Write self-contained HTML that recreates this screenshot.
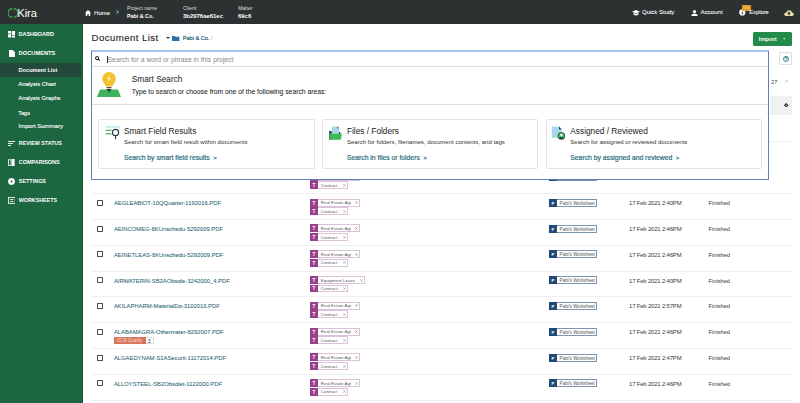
<!DOCTYPE html>
<html><head><meta charset="utf-8"><style>
html,body{margin:0;padding:0;width:800px;height:403px;overflow:hidden;background:#fff;position:relative}
body{font-family:"Liberation Sans",sans-serif}
.t{position:absolute;line-height:1;white-space:nowrap}
.r{position:absolute}
</style></head><body>
<div class="r" style="left:0.00px;top:0.00px;width:800.00px;height:24.30px;background:#2c3231"></div>
<div class="r" style="left:0.00px;top:24.30px;width:82.80px;height:379.00px;background:#1c6640"></div>
<div class="r" style="left:0.00px;top:63.00px;width:82.80px;height:13.50px;background:#23493a"></div>
<div class="r" style="left:80.80px;top:24.30px;width:2.00px;height:379.00px;background:#1a603b"></div>
<svg class="r" style="left:8px;top:8px" width="10" height="10" viewBox="0 0 10 10"><path d="M4.3 0.75 A4.25 4.25 0 0 0 4.3 9.25" fill="none" stroke="#3aa655" stroke-width="1.3"/><path d="M5.7 0.75 A4.25 4.25 0 0 1 5.7 9.25" fill="none" stroke="#3aa655" stroke-width="1.3"/></svg>
<div class="t" style="left:17.30px;top:8.00px;font-size:11.20px;color:#fff;font-weight:400;letter-spacing:-0.1px">Kira</div>
<svg class="r" style="left:84.5px;top:9.5px" width="6" height="6" viewBox="0 0 6 6"><path d="M3 0 L6 2.8 L5.2 2.8 L5.2 6 L3.8 6 L3.8 4.2 L2.2 4.2 L2.2 6 L0.8 6 L0.8 2.8 L0 2.8 Z" fill="#fff"/></svg>
<div class="t" style="left:94.00px;top:10.00px;font-size:6.10px;color:#fff;font-weight:400;-webkit-text-stroke:0.04px #fff">Home</div>
<svg class="r" style="left:116.2px;top:10.4px" width="3" height="4" viewBox="0 0 3 4"><path d="M0.5 0.3 L2.4 2 L0.5 3.7" fill="none" stroke="#eee" stroke-width="0.75"/></svg>
<div class="t" style="left:127.00px;top:6.00px;font-size:5.10px;color:#ddd;font-weight:400;">Project name</div>
<div class="t" style="left:127.00px;top:14.00px;font-size:5.35px;color:#fff;font-weight:700;">Pabi &amp; Co.</div>
<div class="t" style="left:183.00px;top:6.00px;font-size:5.24px;color:#ddd;font-weight:400;">Client</div>
<div class="t" style="left:183.00px;top:14.00px;font-size:5.95px;color:#fff;font-weight:700;">3b2976ae61ec</div>
<div class="t" style="left:238.00px;top:6.00px;font-size:5.08px;color:#ddd;font-weight:400;">Matter</div>
<div class="t" style="left:238.00px;top:14.00px;font-size:5.93px;color:#fff;font-weight:700;">69c6</div>
<svg class="r" style="left:631.5px;top:10px" width="8" height="6" viewBox="0 0 8 6"><path d="M4 0 L8 1.8 L4 3.6 L0 1.8 Z" fill="#fff"/><path d="M1.6 2.8 L1.6 4.8 Q4 6.2 6.4 4.8 L6.4 2.8 L4 3.9 Z" fill="#fff"/></svg>
<div class="t" style="left:642.00px;top:9.00px;font-size:6.00px;color:#fff;font-weight:400;-webkit-text-stroke:0.06px #fff">Quick Study</div>
<svg class="r" style="left:690.5px;top:9.8px" width="7" height="6" viewBox="0 0 7 6"><circle cx="3.5" cy="1.6" r="1.6" fill="#fff"/><path d="M0.3 6 Q0.3 3.4 3.5 3.4 Q6.7 3.4 6.7 6 Z" fill="#fff"/></svg>
<div class="t" style="left:700.60px;top:9.00px;font-size:6.10px;color:#fff;font-weight:400;-webkit-text-stroke:0.06px #fff">Account</div>
<svg class="r" style="left:738.5px;top:9.3px" width="7" height="7" viewBox="0 0 7 7"><circle cx="3.3" cy="3.4" r="3.1" fill="#fff"/><rect x="2.9" y="2.8" width="0.9" height="2.6" fill="#2b2f2f"/></svg>
<div class="r" style="left:742.00px;top:4.60px;width:9.00px;height:6.20px;background:#e8982e;border-radius:1px"></div>
<div class="t" style="left:744.00px;top:6.00px;font-size:4.40px;color:#fbd9a0;font-weight:400;">30</div>
<div class="t" style="left:749.20px;top:10.00px;font-size:5.80px;color:#fff;font-weight:400;-webkit-text-stroke:0.06px #fff">Explore</div>
<svg class="r" style="left:783.5px;top:9.8px" width="10" height="6" viewBox="0 0 10 6"><path d="M2.2 6 Q0 6 0.2 4.2 Q0.5 2.6 2.2 2.8 Q2.8 0 5.4 0.2 Q7.8 0.5 8 2.6 Q10 2.8 9.8 4.6 Q9.6 6 8 6 Z" fill="#ede3a6"/><path d="M5 1.6 L6.8 3.6 L5.7 3.6 L5.7 5.2 L4.3 5.2 L4.3 3.6 L3.2 3.6 Z" fill="#2b2f2f"/></svg>
<svg class="r" style="left:7.8px;top:31.3px" width="7.2" height="6.5" viewBox="0 0 7.2 6.5"><rect x="0" y="0" width="3" height="2.6" fill="#fff"/><rect x="0" y="3.3" width="3" height="3.2" fill="#fff"/><rect x="3.8" y="0" width="3.4" height="4" fill="#fff"/><rect x="3.8" y="4.6" width="3.4" height="1.9" fill="#fff"/></svg>
<div class="t" style="left:18.60px;top:32.00px;font-size:5.43px;color:#fff;font-weight:700;">DASHBOARD</div>
<svg class="r" style="left:8.9px;top:49.6px" width="6" height="7.2" viewBox="0 0 6 7.2"><path d="M0 0 L3.8 0 L6 2.2 L6 7.2 L0 7.2 Z" fill="#fff"/></svg>
<div class="t" style="left:18.60px;top:51.00px;font-size:5.71px;color:#fff;font-weight:700;">DOCUMENTS</div>
<div class="t" style="left:18.60px;top:68.00px;font-size:5.59px;color:#fff;font-weight:700;">Document List</div>
<div class="t" style="left:18.30px;top:82.00px;font-size:5.85px;color:#fff;font-weight:400;-webkit-text-stroke:0.12px #fff">Analysis Chart</div>
<div class="t" style="left:18.30px;top:96.00px;font-size:5.80px;color:#fff;font-weight:400;-webkit-text-stroke:0.12px #fff">Analysis Graphs</div>
<div class="t" style="left:18.30px;top:111.00px;font-size:5.49px;color:#fff;font-weight:400;-webkit-text-stroke:0.12px #fff">Tags</div>
<div class="t" style="left:18.60px;top:123.00px;font-size:6.00px;color:#fff;font-weight:400;-webkit-text-stroke:0.12px #fff">Import Summary</div>
<svg class="r" style="left:7.9px;top:140.9px" width="7" height="5" viewBox="0 0 7 5"><rect x="0" y="0" width="7" height="0.9" fill="#fff"/><rect x="0" y="2" width="5" height="0.9" fill="#fff"/><rect x="0" y="4" width="3" height="0.9" fill="#fff"/></svg>
<div class="t" style="left:18.80px;top:141.00px;font-size:5.33px;color:#fff;font-weight:700;">REVIEW STATUS</div>
<svg class="r" style="left:8.3px;top:158.8px" width="7" height="7" viewBox="0 0 7 7"><rect x="0.4" y="0.8" width="2.6" height="5.6" fill="none" stroke="#fff" stroke-width="0.8"/><rect x="3.6" y="0" width="3" height="7" fill="#fff"/></svg>
<div class="t" style="left:18.80px;top:160.00px;font-size:5.48px;color:#fff;font-weight:700;">COMPARISONS</div>
<svg class="r" style="left:8px;top:177.8px" width="7" height="7" viewBox="0 0 7 7"><circle cx="3.5" cy="3.5" r="2.4" fill="none" stroke="#fff" stroke-width="1.6"/><g stroke="#fff" stroke-width="1.3"><line x1="3.5" y1="0" x2="3.5" y2="7"/><line x1="0" y1="3.5" x2="7" y2="3.5"/><line x1="1" y1="1" x2="6" y2="6"/><line x1="6" y1="1" x2="1" y2="6"/></g><circle cx="3.5" cy="3.5" r="1" fill="#1c6640"/></svg>
<div class="t" style="left:18.80px;top:179.00px;font-size:5.44px;color:#fff;font-weight:700;">SETTINGS</div>
<svg class="r" style="left:7.9px;top:197px" width="7.6" height="7" viewBox="0 0 7.6 7"><rect x="0.4" y="0.4" width="6.8" height="6.2" fill="none" stroke="#fff" stroke-width="0.8"/><rect x="2" y="2" width="3.6" height="0.8" fill="#fff"/><rect x="2" y="4" width="3.6" height="0.8" fill="#fff"/></svg>
<div class="t" style="left:18.80px;top:198.00px;font-size:5.34px;color:#fff;font-weight:700;">WORKSHEETS</div>
<div class="t" style="left:91.50px;top:33.00px;font-size:9.60px;color:#2a2a2a;font-weight:400;letter-spacing:0.45px;-webkit-text-stroke:0.15px #2a2a2a">Document List</div>
<svg class="r" style="left:165.5px;top:37.3px" width="4" height="2" viewBox="0 0 4 2"><path d="M0 0 L4 0 L2 2 Z" fill="#333"/></svg>
<svg class="r" style="left:172.2px;top:35.5px" width="7.4" height="5.6" viewBox="0 0 7.4 5.6"><path d="M0 0 L2.8 0 L3.4 0.8 L7.4 0.8 L7.4 5.6 L0 5.6 Z" fill="#2a74a8"/></svg>
<div class="t" style="left:182.80px;top:36.00px;font-size:5.58px;color:#24607e;font-weight:400;-webkit-text-stroke:0.18px #24607e">Pabi &amp; Co. <span style="color:#999;-webkit-text-stroke:0">/</span></div>
<div class="r" style="left:753.20px;top:31.90px;width:39.00px;height:13.80px;background:#238a4a;border-radius:1.5px"></div>
<div class="t" style="left:758.80px;top:37.00px;font-size:5.79px;color:#fff;font-weight:700;">Import</div>
<svg class="r" style="left:782.6px;top:38.4px" width="2.6" height="1.4" viewBox="0 0 2.6 1.4"><path d="M0 0 L2.6 0 L1.3 1.4 Z" fill="#cfe"/></svg>
<div class="r" style="left:779.30px;top:52.40px;width:13.20px;height:12.80px;border:0.6px solid #ddd;box-sizing:border-box;background:#fff;border-radius:1px"></div>
<svg class="r" style="left:782.8px;top:55.8px" width="6" height="6" viewBox="0 0 6 6"><circle cx="3" cy="3" r="2.5" fill="none" stroke="#236f7d" stroke-width="0.9"/><path d="M2 2.3 Q2 1.3 3 1.3 Q4 1.3 4 2.2 Q4 2.9 3.1 3.2 L3.1 4" fill="none" stroke="#236f7d" stroke-width="0.8"/></svg>
<div class="t" style="left:771.20px;top:80.00px;font-size:5.60px;color:#444;font-weight:400;">27</div>
<div class="t" style="left:784.80px;top:79.00px;font-size:5.60px;color:#999;font-weight:400;">&gt;</div>
<div class="r" style="left:770.40px;top:95.50px;width:21.60px;height:19.40px;background:#f1f1f1"></div>
<svg class="r" style="left:784.3px;top:102.8px" width="4.4" height="4.4" viewBox="0 0 4.4 4.4"><path d="M2.2 0 L4.4 2.2 L2.2 4.4 L0 2.2 Z" fill="#111"/><circle cx="2.2" cy="2.2" r="0.7" fill="#f1f1f1"/></svg>
<div class="r" style="left:91.00px;top:193.11px;width:701.00px;height:0.80px;background:#efefef"></div>
<div class="r" style="left:97.10px;top:174.00px;width:5.80px;height:5.90px;border:0.8px solid #4a4a4a;box-sizing:border-box;border-radius:0.8px"></div>
<div class="r" style="left:310.10px;top:172.80px;width:7.80px;height:7.90px;background:#9a3f8b"></div>
<div class="t" style="left:312.50px;top:176.00px;font-size:4.60px;color:#fff;font-weight:700;">T</div>
<div class="r" style="left:317.90px;top:172.80px;width:42.20px;height:7.90px;border:0.5px solid #dcc2d6;border-left:none;box-sizing:border-box;background:#fff"></div>
<div class="t" style="left:320.80px;top:175.00px;font-size:4.40px;color:#5a5a5a;font-weight:400;">Real Estate Agt</div>
<svg class="r" style="left:355.00px;top:175.40px" width="3" height="3" viewBox="0 0 3 3"><path d="M0.2 0.2 L2.8 2.8 M2.8 0.2 L0.2 2.8" stroke="#777" stroke-width="0.45"/></svg>
<div class="r" style="left:310.10px;top:181.30px;width:7.80px;height:7.90px;background:#9a3f8b"></div>
<div class="t" style="left:312.50px;top:184.00px;font-size:4.60px;color:#fff;font-weight:700;">T</div>
<div class="r" style="left:317.90px;top:181.30px;width:30.20px;height:7.90px;border:0.5px solid #dcc2d6;border-left:none;box-sizing:border-box;background:#fff"></div>
<div class="t" style="left:320.80px;top:184.00px;font-size:4.40px;color:#5a5a5a;font-weight:400;">Contract</div>
<svg class="r" style="left:343.00px;top:183.90px" width="3" height="3" viewBox="0 0 3 3"><path d="M0.2 0.2 L2.8 2.8 M2.8 0.2 L0.2 2.8" stroke="#777" stroke-width="0.45"/></svg>
<div class="r" style="left:549.10px;top:172.90px;width:8.30px;height:8.00px;background:#1e4a78"></div>
<div class="t" style="left:551.40px;top:176.00px;font-size:4.20px;color:#fff;font-weight:700;">P</div>
<div class="r" style="left:557.40px;top:172.90px;width:40.10px;height:8.00px;border:0.5px solid #7f93ad;border-left:none;box-sizing:border-box;background:#fff"></div>
<div class="t" style="left:559.60px;top:176.00px;font-size:4.57px;color:#555;font-weight:400;">Pabi's Worksheet</div>
<div class="r" style="left:91.00px;top:218.92px;width:701.00px;height:0.80px;background:#efefef"></div>
<div class="r" style="left:97.10px;top:199.81px;width:5.80px;height:5.90px;border:0.8px solid #4a4a4a;box-sizing:border-box;border-radius:0.8px"></div>
<div class="t" style="left:113.90px;top:201.00px;font-size:5.85px;color:#1e5f70;font-weight:400;-webkit-text-stroke:0.05px #1e5f70">AEGLEABIOT-10QQuarter-1192016.PDF</div>
<div class="r" style="left:310.10px;top:198.61px;width:7.80px;height:7.90px;background:#9a3f8b"></div>
<div class="t" style="left:312.50px;top:202.00px;font-size:4.60px;color:#fff;font-weight:700;">T</div>
<div class="r" style="left:317.90px;top:198.61px;width:42.20px;height:7.90px;border:0.5px solid #dcc2d6;border-left:none;box-sizing:border-box;background:#fff"></div>
<div class="t" style="left:320.80px;top:201.00px;font-size:4.40px;color:#5a5a5a;font-weight:400;">Real Estate Agt</div>
<svg class="r" style="left:355.00px;top:201.21px" width="3" height="3" viewBox="0 0 3 3"><path d="M0.2 0.2 L2.8 2.8 M2.8 0.2 L0.2 2.8" stroke="#777" stroke-width="0.45"/></svg>
<div class="r" style="left:310.10px;top:207.11px;width:7.80px;height:7.90px;background:#9a3f8b"></div>
<div class="t" style="left:312.50px;top:210.00px;font-size:4.60px;color:#fff;font-weight:700;">T</div>
<div class="r" style="left:317.90px;top:207.11px;width:30.20px;height:7.90px;border:0.5px solid #dcc2d6;border-left:none;box-sizing:border-box;background:#fff"></div>
<div class="t" style="left:320.80px;top:210.00px;font-size:4.40px;color:#5a5a5a;font-weight:400;">Contract</div>
<svg class="r" style="left:343.00px;top:209.71px" width="3" height="3" viewBox="0 0 3 3"><path d="M0.2 0.2 L2.8 2.8 M2.8 0.2 L0.2 2.8" stroke="#777" stroke-width="0.45"/></svg>
<div class="r" style="left:549.10px;top:198.71px;width:8.30px;height:8.00px;background:#1e4a78"></div>
<div class="t" style="left:551.40px;top:202.00px;font-size:4.20px;color:#fff;font-weight:700;">P</div>
<div class="r" style="left:557.40px;top:198.71px;width:40.10px;height:8.00px;border:0.5px solid #7f93ad;border-left:none;box-sizing:border-box;background:#fff"></div>
<div class="t" style="left:559.60px;top:202.00px;font-size:4.57px;color:#555;font-weight:400;">Pabi's Worksheet</div>
<div class="t" style="left:629.00px;top:200.00px;font-size:6.00px;color:#3a3a3a;font-weight:400;letter-spacing:-0.2px">17 Feb 2021 2:40PM</div>
<div class="t" style="left:708.50px;top:201.00px;font-size:5.80px;color:#3a3a3a;font-weight:400;letter-spacing:-0.05px">Finished</div>
<div class="r" style="left:91.00px;top:244.73px;width:701.00px;height:0.80px;background:#efefef"></div>
<div class="r" style="left:97.10px;top:225.62px;width:5.80px;height:5.90px;border:0.8px solid #4a4a4a;box-sizing:border-box;border-radius:0.8px"></div>
<div class="t" style="left:113.90px;top:227.00px;font-size:5.85px;color:#1e5f70;font-weight:400;-webkit-text-stroke:0.05px #1e5f70">AEINCOMEG-8KUnschedu-5292009.PDF</div>
<div class="r" style="left:310.10px;top:224.42px;width:7.80px;height:7.90px;background:#9a3f8b"></div>
<div class="t" style="left:312.50px;top:227.00px;font-size:4.60px;color:#fff;font-weight:700;">T</div>
<div class="r" style="left:317.90px;top:224.42px;width:42.20px;height:7.90px;border:0.5px solid #dcc2d6;border-left:none;box-sizing:border-box;background:#fff"></div>
<div class="t" style="left:320.80px;top:227.00px;font-size:4.40px;color:#5a5a5a;font-weight:400;">Real Estate Agt</div>
<svg class="r" style="left:355.00px;top:227.02px" width="3" height="3" viewBox="0 0 3 3"><path d="M0.2 0.2 L2.8 2.8 M2.8 0.2 L0.2 2.8" stroke="#777" stroke-width="0.45"/></svg>
<div class="r" style="left:310.10px;top:232.92px;width:7.80px;height:7.90px;background:#9a3f8b"></div>
<div class="t" style="left:312.50px;top:236.00px;font-size:4.60px;color:#fff;font-weight:700;">T</div>
<div class="r" style="left:317.90px;top:232.92px;width:30.20px;height:7.90px;border:0.5px solid #dcc2d6;border-left:none;box-sizing:border-box;background:#fff"></div>
<div class="t" style="left:320.80px;top:236.00px;font-size:4.40px;color:#5a5a5a;font-weight:400;">Contract</div>
<svg class="r" style="left:343.00px;top:235.52px" width="3" height="3" viewBox="0 0 3 3"><path d="M0.2 0.2 L2.8 2.8 M2.8 0.2 L0.2 2.8" stroke="#777" stroke-width="0.45"/></svg>
<div class="r" style="left:549.10px;top:224.52px;width:8.30px;height:8.00px;background:#1e4a78"></div>
<div class="t" style="left:551.40px;top:228.00px;font-size:4.20px;color:#fff;font-weight:700;">P</div>
<div class="r" style="left:557.40px;top:224.52px;width:40.10px;height:8.00px;border:0.5px solid #7f93ad;border-left:none;box-sizing:border-box;background:#fff"></div>
<div class="t" style="left:559.60px;top:228.00px;font-size:4.57px;color:#555;font-weight:400;">Pabi's Worksheet</div>
<div class="t" style="left:629.00px;top:226.00px;font-size:6.00px;color:#3a3a3a;font-weight:400;letter-spacing:-0.2px">17 Feb 2021 2:46PM</div>
<div class="t" style="left:708.50px;top:227.00px;font-size:5.80px;color:#3a3a3a;font-weight:400;letter-spacing:-0.05px">Finished</div>
<div class="r" style="left:91.00px;top:270.54px;width:701.00px;height:0.80px;background:#efefef"></div>
<div class="r" style="left:97.10px;top:251.43px;width:5.80px;height:5.90px;border:0.8px solid #4a4a4a;box-sizing:border-box;border-radius:0.8px"></div>
<div class="t" style="left:113.90px;top:253.00px;font-size:5.85px;color:#1e5f70;font-weight:400;-webkit-text-stroke:0.05px #1e5f70">AEINETLEAS-8KUnschedu-5292009.PDF</div>
<div class="r" style="left:310.10px;top:250.23px;width:7.80px;height:7.90px;background:#9a3f8b"></div>
<div class="t" style="left:312.50px;top:253.00px;font-size:4.60px;color:#fff;font-weight:700;">T</div>
<div class="r" style="left:317.90px;top:250.23px;width:42.20px;height:7.90px;border:0.5px solid #dcc2d6;border-left:none;box-sizing:border-box;background:#fff"></div>
<div class="t" style="left:320.80px;top:253.00px;font-size:4.40px;color:#5a5a5a;font-weight:400;">Real Estate Agt</div>
<svg class="r" style="left:355.00px;top:252.83px" width="3" height="3" viewBox="0 0 3 3"><path d="M0.2 0.2 L2.8 2.8 M2.8 0.2 L0.2 2.8" stroke="#777" stroke-width="0.45"/></svg>
<div class="r" style="left:310.10px;top:258.73px;width:7.80px;height:7.90px;background:#9a3f8b"></div>
<div class="t" style="left:312.50px;top:262.00px;font-size:4.60px;color:#fff;font-weight:700;">T</div>
<div class="r" style="left:317.90px;top:258.73px;width:30.20px;height:7.90px;border:0.5px solid #dcc2d6;border-left:none;box-sizing:border-box;background:#fff"></div>
<div class="t" style="left:320.80px;top:261.00px;font-size:4.40px;color:#5a5a5a;font-weight:400;">Contract</div>
<svg class="r" style="left:343.00px;top:261.33px" width="3" height="3" viewBox="0 0 3 3"><path d="M0.2 0.2 L2.8 2.8 M2.8 0.2 L0.2 2.8" stroke="#777" stroke-width="0.45"/></svg>
<div class="r" style="left:549.10px;top:250.33px;width:8.30px;height:8.00px;background:#1e4a78"></div>
<div class="t" style="left:551.40px;top:253.00px;font-size:4.20px;color:#fff;font-weight:700;">P</div>
<div class="r" style="left:557.40px;top:250.33px;width:40.10px;height:8.00px;border:0.5px solid #7f93ad;border-left:none;box-sizing:border-box;background:#fff"></div>
<div class="t" style="left:559.60px;top:253.00px;font-size:4.57px;color:#555;font-weight:400;">Pabi's Worksheet</div>
<div class="t" style="left:629.00px;top:252.00px;font-size:6.00px;color:#3a3a3a;font-weight:400;letter-spacing:-0.2px">17 Feb 2021 2:46PM</div>
<div class="t" style="left:708.50px;top:253.00px;font-size:5.80px;color:#3a3a3a;font-weight:400;letter-spacing:-0.05px">Finished</div>
<div class="r" style="left:91.00px;top:296.35px;width:701.00px;height:0.80px;background:#efefef"></div>
<div class="r" style="left:97.10px;top:277.24px;width:5.80px;height:5.90px;border:0.8px solid #4a4a4a;box-sizing:border-box;border-radius:0.8px"></div>
<div class="t" style="left:113.90px;top:279.00px;font-size:5.85px;color:#1e5f70;font-weight:400;-webkit-text-stroke:0.05px #1e5f70">AIRWATERIN-SB2AObsole-3242000_4.PDF</div>
<div class="r" style="left:310.10px;top:276.04px;width:7.80px;height:7.90px;background:#9a3f8b"></div>
<div class="t" style="left:312.50px;top:279.00px;font-size:4.60px;color:#fff;font-weight:700;">T</div>
<div class="r" style="left:317.90px;top:276.04px;width:46.70px;height:7.90px;border:0.5px solid #dcc2d6;border-left:none;box-sizing:border-box;background:#fff"></div>
<div class="t" style="left:320.80px;top:279.00px;font-size:4.40px;color:#5a5a5a;font-weight:400;">Equipment Lease</div>
<svg class="r" style="left:359.50px;top:278.64px" width="3" height="3" viewBox="0 0 3 3"><path d="M0.2 0.2 L2.8 2.8 M2.8 0.2 L0.2 2.8" stroke="#777" stroke-width="0.45"/></svg>
<div class="r" style="left:310.10px;top:284.54px;width:7.80px;height:7.90px;background:#9a3f8b"></div>
<div class="t" style="left:312.50px;top:287.00px;font-size:4.60px;color:#fff;font-weight:700;">T</div>
<div class="r" style="left:317.90px;top:284.54px;width:30.20px;height:7.90px;border:0.5px solid #dcc2d6;border-left:none;box-sizing:border-box;background:#fff"></div>
<div class="t" style="left:320.80px;top:287.00px;font-size:4.40px;color:#5a5a5a;font-weight:400;">Contract</div>
<svg class="r" style="left:343.00px;top:287.14px" width="3" height="3" viewBox="0 0 3 3"><path d="M0.2 0.2 L2.8 2.8 M2.8 0.2 L0.2 2.8" stroke="#777" stroke-width="0.45"/></svg>
<div class="r" style="left:549.10px;top:276.14px;width:8.30px;height:8.00px;background:#1e4a78"></div>
<div class="t" style="left:551.40px;top:279.00px;font-size:4.20px;color:#fff;font-weight:700;">P</div>
<div class="r" style="left:557.40px;top:276.14px;width:40.10px;height:8.00px;border:0.5px solid #7f93ad;border-left:none;box-sizing:border-box;background:#fff"></div>
<div class="t" style="left:559.60px;top:279.00px;font-size:4.57px;color:#555;font-weight:400;">Pabi's Worksheet</div>
<div class="t" style="left:629.00px;top:278.00px;font-size:6.00px;color:#3a3a3a;font-weight:400;letter-spacing:-0.2px">17 Feb 2021 2:40PM</div>
<div class="t" style="left:708.50px;top:279.00px;font-size:5.80px;color:#3a3a3a;font-weight:400;letter-spacing:-0.05px">Finished</div>
<div class="r" style="left:91.00px;top:322.16px;width:701.00px;height:0.80px;background:#efefef"></div>
<div class="r" style="left:97.10px;top:303.05px;width:5.80px;height:5.90px;border:0.8px solid #4a4a4a;box-sizing:border-box;border-radius:0.8px"></div>
<div class="t" style="left:113.90px;top:304.00px;font-size:5.85px;color:#1e5f70;font-weight:400;-webkit-text-stroke:0.05px #1e5f70">AKILAPHARM-MaterialDo-3102010.PDF</div>
<div class="r" style="left:310.10px;top:301.85px;width:7.80px;height:7.90px;background:#9a3f8b"></div>
<div class="t" style="left:312.50px;top:305.00px;font-size:4.60px;color:#fff;font-weight:700;">T</div>
<div class="r" style="left:317.90px;top:301.85px;width:42.20px;height:7.90px;border:0.5px solid #dcc2d6;border-left:none;box-sizing:border-box;background:#fff"></div>
<div class="t" style="left:320.80px;top:304.00px;font-size:4.40px;color:#5a5a5a;font-weight:400;">Real Estate Agt</div>
<svg class="r" style="left:355.00px;top:304.45px" width="3" height="3" viewBox="0 0 3 3"><path d="M0.2 0.2 L2.8 2.8 M2.8 0.2 L0.2 2.8" stroke="#777" stroke-width="0.45"/></svg>
<div class="r" style="left:310.10px;top:310.35px;width:7.80px;height:7.90px;background:#9a3f8b"></div>
<div class="t" style="left:312.50px;top:313.00px;font-size:4.60px;color:#fff;font-weight:700;">T</div>
<div class="r" style="left:317.90px;top:310.35px;width:30.20px;height:7.90px;border:0.5px solid #dcc2d6;border-left:none;box-sizing:border-box;background:#fff"></div>
<div class="t" style="left:320.80px;top:313.00px;font-size:4.40px;color:#5a5a5a;font-weight:400;">Contract</div>
<svg class="r" style="left:343.00px;top:312.95px" width="3" height="3" viewBox="0 0 3 3"><path d="M0.2 0.2 L2.8 2.8 M2.8 0.2 L0.2 2.8" stroke="#777" stroke-width="0.45"/></svg>
<div class="r" style="left:549.10px;top:301.95px;width:8.30px;height:8.00px;background:#1e4a78"></div>
<div class="t" style="left:551.40px;top:305.00px;font-size:4.20px;color:#fff;font-weight:700;">P</div>
<div class="r" style="left:557.40px;top:301.95px;width:40.10px;height:8.00px;border:0.5px solid #7f93ad;border-left:none;box-sizing:border-box;background:#fff"></div>
<div class="t" style="left:559.60px;top:305.00px;font-size:4.57px;color:#555;font-weight:400;">Pabi's Worksheet</div>
<div class="t" style="left:629.00px;top:303.00px;font-size:6.00px;color:#3a3a3a;font-weight:400;letter-spacing:-0.2px">17 Feb 2021 2:57PM</div>
<div class="t" style="left:708.50px;top:304.00px;font-size:5.80px;color:#3a3a3a;font-weight:400;letter-spacing:-0.05px">Finished</div>
<div class="r" style="left:91.00px;top:347.97px;width:701.00px;height:0.80px;background:#efefef"></div>
<div class="r" style="left:97.10px;top:328.86px;width:5.80px;height:5.90px;border:0.8px solid #4a4a4a;box-sizing:border-box;border-radius:0.8px"></div>
<div class="t" style="left:113.90px;top:330.00px;font-size:5.85px;color:#1e5f70;font-weight:400;-webkit-text-stroke:0.05px #1e5f70">ALABAMAGRA-Othermater-8292007.PDF</div>
<div class="r" style="left:310.10px;top:327.66px;width:7.80px;height:7.90px;background:#9a3f8b"></div>
<div class="t" style="left:312.50px;top:331.00px;font-size:4.60px;color:#fff;font-weight:700;">T</div>
<div class="r" style="left:317.90px;top:327.66px;width:42.20px;height:7.90px;border:0.5px solid #dcc2d6;border-left:none;box-sizing:border-box;background:#fff"></div>
<div class="t" style="left:320.80px;top:330.00px;font-size:4.40px;color:#5a5a5a;font-weight:400;">Real Estate Agt</div>
<svg class="r" style="left:355.00px;top:330.26px" width="3" height="3" viewBox="0 0 3 3"><path d="M0.2 0.2 L2.8 2.8 M2.8 0.2 L0.2 2.8" stroke="#777" stroke-width="0.45"/></svg>
<div class="r" style="left:310.10px;top:336.16px;width:7.80px;height:7.90px;background:#9a3f8b"></div>
<div class="t" style="left:312.50px;top:339.00px;font-size:4.60px;color:#fff;font-weight:700;">T</div>
<div class="r" style="left:317.90px;top:336.16px;width:30.20px;height:7.90px;border:0.5px solid #dcc2d6;border-left:none;box-sizing:border-box;background:#fff"></div>
<div class="t" style="left:320.80px;top:339.00px;font-size:4.40px;color:#5a5a5a;font-weight:400;">Contract</div>
<svg class="r" style="left:343.00px;top:338.76px" width="3" height="3" viewBox="0 0 3 3"><path d="M0.2 0.2 L2.8 2.8 M2.8 0.2 L0.2 2.8" stroke="#777" stroke-width="0.45"/></svg>
<div class="r" style="left:549.10px;top:327.76px;width:8.30px;height:8.00px;background:#1e4a78"></div>
<div class="t" style="left:551.40px;top:331.00px;font-size:4.20px;color:#fff;font-weight:700;">P</div>
<div class="r" style="left:557.40px;top:327.76px;width:40.10px;height:8.00px;border:0.5px solid #7f93ad;border-left:none;box-sizing:border-box;background:#fff"></div>
<div class="t" style="left:559.60px;top:331.00px;font-size:4.57px;color:#555;font-weight:400;">Pabi's Worksheet</div>
<div class="t" style="left:629.00px;top:329.00px;font-size:6.00px;color:#3a3a3a;font-weight:400;letter-spacing:-0.2px">17 Feb 2021 2:46PM</div>
<div class="t" style="left:708.50px;top:330.00px;font-size:5.80px;color:#3a3a3a;font-weight:400;letter-spacing:-0.05px">Finished</div>
<div class="r" style="left:113.90px;top:337.16px;width:31.80px;height:7.00px;background:#d9735a"></div>
<div class="t" style="left:116.50px;top:339.00px;font-size:4.60px;color:#f7dcd4;font-weight:400;">OCR Quality</div>
<div class="r" style="left:145.70px;top:337.06px;width:7.90px;height:7.00px;border:0.6px solid #ddd;border-left:none;box-sizing:border-box;background:#fff"></div>
<div class="t" style="left:147.80px;top:339.00px;font-size:5.00px;color:#333;font-weight:400;">3</div>
<div class="r" style="left:91.00px;top:373.78px;width:701.00px;height:0.80px;background:#efefef"></div>
<div class="r" style="left:97.10px;top:354.67px;width:5.80px;height:5.90px;border:0.8px solid #4a4a4a;box-sizing:border-box;border-radius:0.8px"></div>
<div class="t" style="left:113.90px;top:356.00px;font-size:5.85px;color:#1e5f70;font-weight:400;-webkit-text-stroke:0.05px #1e5f70">ALGAEDYNAM-S1ASecurit-11172014.PDF</div>
<div class="r" style="left:310.10px;top:353.47px;width:7.80px;height:7.90px;background:#9a3f8b"></div>
<div class="t" style="left:312.50px;top:356.00px;font-size:4.60px;color:#fff;font-weight:700;">T</div>
<div class="r" style="left:317.90px;top:353.47px;width:42.20px;height:7.90px;border:0.5px solid #dcc2d6;border-left:none;box-sizing:border-box;background:#fff"></div>
<div class="t" style="left:320.80px;top:356.00px;font-size:4.40px;color:#5a5a5a;font-weight:400;">Real Estate Agt</div>
<svg class="r" style="left:355.00px;top:356.07px" width="3" height="3" viewBox="0 0 3 3"><path d="M0.2 0.2 L2.8 2.8 M2.8 0.2 L0.2 2.8" stroke="#777" stroke-width="0.45"/></svg>
<div class="r" style="left:310.10px;top:361.97px;width:7.80px;height:7.90px;background:#9a3f8b"></div>
<div class="t" style="left:312.50px;top:365.00px;font-size:4.60px;color:#fff;font-weight:700;">T</div>
<div class="r" style="left:317.90px;top:361.97px;width:30.20px;height:7.90px;border:0.5px solid #dcc2d6;border-left:none;box-sizing:border-box;background:#fff"></div>
<div class="t" style="left:320.80px;top:365.00px;font-size:4.40px;color:#5a5a5a;font-weight:400;">Contract</div>
<svg class="r" style="left:343.00px;top:364.57px" width="3" height="3" viewBox="0 0 3 3"><path d="M0.2 0.2 L2.8 2.8 M2.8 0.2 L0.2 2.8" stroke="#777" stroke-width="0.45"/></svg>
<div class="r" style="left:549.10px;top:353.57px;width:8.30px;height:8.00px;background:#1e4a78"></div>
<div class="t" style="left:551.40px;top:357.00px;font-size:4.20px;color:#fff;font-weight:700;">P</div>
<div class="r" style="left:557.40px;top:353.57px;width:40.10px;height:8.00px;border:0.5px solid #7f93ad;border-left:none;box-sizing:border-box;background:#fff"></div>
<div class="t" style="left:559.60px;top:357.00px;font-size:4.57px;color:#555;font-weight:400;">Pabi's Worksheet</div>
<div class="t" style="left:629.00px;top:355.00px;font-size:6.00px;color:#3a3a3a;font-weight:400;letter-spacing:-0.2px">17 Feb 2021 2:47PM</div>
<div class="t" style="left:708.50px;top:356.00px;font-size:5.80px;color:#3a3a3a;font-weight:400;letter-spacing:-0.05px">Finished</div>
<div class="r" style="left:91.00px;top:399.59px;width:701.00px;height:0.80px;background:#efefef"></div>
<div class="r" style="left:97.10px;top:380.48px;width:5.80px;height:5.90px;border:0.8px solid #4a4a4a;box-sizing:border-box;border-radius:0.8px"></div>
<div class="t" style="left:113.90px;top:382.00px;font-size:5.85px;color:#1e5f70;font-weight:400;-webkit-text-stroke:0.05px #1e5f70">ALLOYSTEEL-SB2Obsolet-1122000.PDF</div>
<div class="r" style="left:310.10px;top:379.28px;width:7.80px;height:7.90px;background:#9a3f8b"></div>
<div class="t" style="left:312.50px;top:382.00px;font-size:4.60px;color:#fff;font-weight:700;">T</div>
<div class="r" style="left:317.90px;top:379.28px;width:42.20px;height:7.90px;border:0.5px solid #dcc2d6;border-left:none;box-sizing:border-box;background:#fff"></div>
<div class="t" style="left:320.80px;top:382.00px;font-size:4.40px;color:#5a5a5a;font-weight:400;">Real Estate Agt</div>
<svg class="r" style="left:355.00px;top:381.88px" width="3" height="3" viewBox="0 0 3 3"><path d="M0.2 0.2 L2.8 2.8 M2.8 0.2 L0.2 2.8" stroke="#777" stroke-width="0.45"/></svg>
<div class="r" style="left:310.10px;top:387.78px;width:7.80px;height:7.90px;background:#9a3f8b"></div>
<div class="t" style="left:312.50px;top:391.00px;font-size:4.60px;color:#fff;font-weight:700;">T</div>
<div class="r" style="left:317.90px;top:387.78px;width:30.20px;height:7.90px;border:0.5px solid #dcc2d6;border-left:none;box-sizing:border-box;background:#fff"></div>
<div class="t" style="left:320.80px;top:390.00px;font-size:4.40px;color:#5a5a5a;font-weight:400;">Contract</div>
<svg class="r" style="left:343.00px;top:390.38px" width="3" height="3" viewBox="0 0 3 3"><path d="M0.2 0.2 L2.8 2.8 M2.8 0.2 L0.2 2.8" stroke="#777" stroke-width="0.45"/></svg>
<div class="r" style="left:549.10px;top:379.38px;width:8.30px;height:8.00px;background:#1e4a78"></div>
<div class="t" style="left:551.40px;top:382.00px;font-size:4.20px;color:#fff;font-weight:700;">P</div>
<div class="r" style="left:557.40px;top:379.38px;width:40.10px;height:8.00px;border:0.5px solid #7f93ad;border-left:none;box-sizing:border-box;background:#fff"></div>
<div class="t" style="left:559.60px;top:382.00px;font-size:4.57px;color:#555;font-weight:400;">Pabi's Worksheet</div>
<div class="t" style="left:629.00px;top:381.00px;font-size:6.00px;color:#3a3a3a;font-weight:400;letter-spacing:-0.2px">17 Feb 2021 2:46PM</div>
<div class="t" style="left:708.50px;top:382.00px;font-size:5.80px;color:#3a3a3a;font-weight:400;letter-spacing:-0.05px">Finished</div>
<div class="r" style="left:91.00px;top:141.49px;width:701.00px;height:0.80px;background:#efefef"></div>
<div class="r" style="left:91.00px;top:50.00px;width:678.00px;height:130.00px;background:#fff;border:1px solid #5f7db8;border-top:2px solid #a6c1ee;box-sizing:border-box"></div>
<svg class="r" style="left:95.4px;top:55.8px" width="5" height="5" viewBox="0 0 5 5"><circle cx="2.1" cy="2.1" r="1.55" fill="none" stroke="#222" stroke-width="1.05"/><line x1="3.2" y1="3.2" x2="4.7" y2="4.7" stroke="#222" stroke-width="1.1"/></svg>
<div class="r" style="left:107.40px;top:56.20px;width:0.60px;height:6.60px;background:#333"></div>
<div class="t" style="left:107.60px;top:57.00px;font-size:6.79px;color:#888;font-weight:400;">Search for a word or phrase in this project</div>
<div class="r" style="left:92.20px;top:66.00px;width:676.00px;height:0.70px;background:#ddd"></div>
<svg class="r" style="left:96px;top:71px" width="26" height="27" viewBox="0 0 26 27"><circle cx="13" cy="7.8" r="6.8" fill="#f2c230"/><path d="M8 12 L18 12 L16 15.5 L10 15.5 Z" fill="#f2c230"/><path d="M13.6 4.2 L11.5 8 L13 8 L12.4 11 L14.5 7.2 L13 7.2 Z" fill="#fff"/><rect x="10.5" y="16.2" width="5" height="1" fill="#222"/><path d="M4 18.5 L22 18.5 L25 26 L1 26 Z" fill="#3db35c"/><path d="M10.5 18 L15.5 18 L13 21.2 Z" fill="#1a3a2a"/></svg>
<div class="t" style="left:131.80px;top:75.00px;font-size:8.29px;color:#222;font-weight:400;">Smart Search</div>
<div class="t" style="left:131.80px;top:89.00px;font-size:6.77px;color:#222;font-weight:400;-webkit-text-stroke:0.05px #222">Type to search or choose from one of the following search areas:</div>
<div class="r" style="left:92.20px;top:104.10px;width:676.00px;height:0.70px;background:#ddd"></div>
<div class="r" style="left:98.30px;top:119.40px;width:216.40px;height:49.40px;border:0.7px solid #e2e2e2;box-sizing:border-box;border-radius:1.5px"></div>
<div class="t" style="left:123.90px;top:127.00px;font-size:8.30px;color:#222;font-weight:400;">Smart Field Results</div>
<div class="t" style="left:123.90px;top:139.00px;font-size:6.11px;color:#333;font-weight:400;">Search for smart field result within documents</div>
<div class="t" style="left:123.90px;top:155.00px;font-size:6.80px;color:#2a6f7f;font-weight:400;-webkit-text-stroke:0.2px #2a6f7f">Search by smart field results &nbsp;<span style="font-size:5.5px">&gt;</span></div>
<div class="r" style="left:321.90px;top:119.40px;width:216.20px;height:49.40px;border:0.7px solid #e2e2e2;box-sizing:border-box;border-radius:1.5px"></div>
<div class="t" style="left:346.90px;top:127.00px;font-size:8.30px;color:#222;font-weight:400;">Files / Folders</div>
<div class="t" style="left:346.90px;top:139.00px;font-size:6.06px;color:#333;font-weight:400;">Search for folders, filenames, document contents, and tags</div>
<div class="t" style="left:346.90px;top:155.00px;font-size:6.80px;color:#2a6f7f;font-weight:400;-webkit-text-stroke:0.2px #2a6f7f">Search in files or folders &nbsp;<span style="font-size:5.5px">&gt;</span></div>
<div class="r" style="left:545.60px;top:119.40px;width:216.30px;height:49.40px;border:0.7px solid #e2e2e2;box-sizing:border-box;border-radius:1.5px"></div>
<div class="t" style="left:570.30px;top:127.00px;font-size:8.30px;color:#222;font-weight:400;">Assigned / Reviewed</div>
<div class="t" style="left:570.30px;top:139.00px;font-size:6.00px;color:#333;font-weight:400;">Search for assigned or reviewed documents</div>
<div class="t" style="left:570.30px;top:155.00px;font-size:6.80px;color:#2a6f7f;font-weight:400;-webkit-text-stroke:0.2px #2a6f7f">Search by assigned and reviewed &nbsp;<span style="font-size:5.5px">&gt;</span></div>
<svg class="r" style="left:104.6px;top:126.3px" width="15" height="14" viewBox="0 0 15 14"><rect x="0.5" y="0.4" width="14" height="1.1" fill="#a6d8ea"/><rect x="0.5" y="3.8" width="6" height="1.2" fill="#3dba5c"/><rect x="0.5" y="7.2" width="6" height="1.2" fill="#3dba5c"/><circle cx="10.5" cy="6.4" r="3.1" fill="#fff" stroke="#1d3d38" stroke-width="1.2"/><rect x="9.95" y="9.5" width="1.1" height="3.7" fill="#1d3d38"/></svg>
<svg class="r" style="left:328px;top:126px" width="15" height="15" viewBox="0 0 15 15"><rect x="1.2" y="5" width="2.4" height="8.8" fill="#1a3a35"/><rect x="11" y="6" width="1.2" height="2.2" fill="#1a3a35"/><path d="M4 0.6 L9.6 0.6 L11 2 L11 8 L4 8 Z" fill="#a6d8ea"/><path d="M9.4 0.6 L11 2.2 L9.4 2.2 Z" fill="#1a3a35"/><path d="M1.5 7.8 L14 7.8 L12.9 13.8 L1.5 13.8 Z" fill="#3dba5c"/></svg>
<svg class="r" style="left:551px;top:126px" width="16" height="15" viewBox="0 0 16 15"><path d="M0.8 0.6 L8 0.6 L10.7 3.3 L10.7 11.8 L0.8 11.8 Z" fill="#a6d8ea"/><path d="M8 0.6 L10.7 3.3 L8 3.3 Z" fill="#1a3a35"/><circle cx="10.4" cy="9.9" r="3.7" fill="#1a3a35"/><circle cx="10.4" cy="9.9" r="3.0" fill="#3dba5c"/><circle cx="10.4" cy="9.0" r="1.3" fill="#fff"/><path d="M7.9 12.2 Q10.4 10.2 12.9 12.2 Q10.4 14.3 7.9 12.2 Z" fill="#1a3a35"/></svg>
</body></html>
